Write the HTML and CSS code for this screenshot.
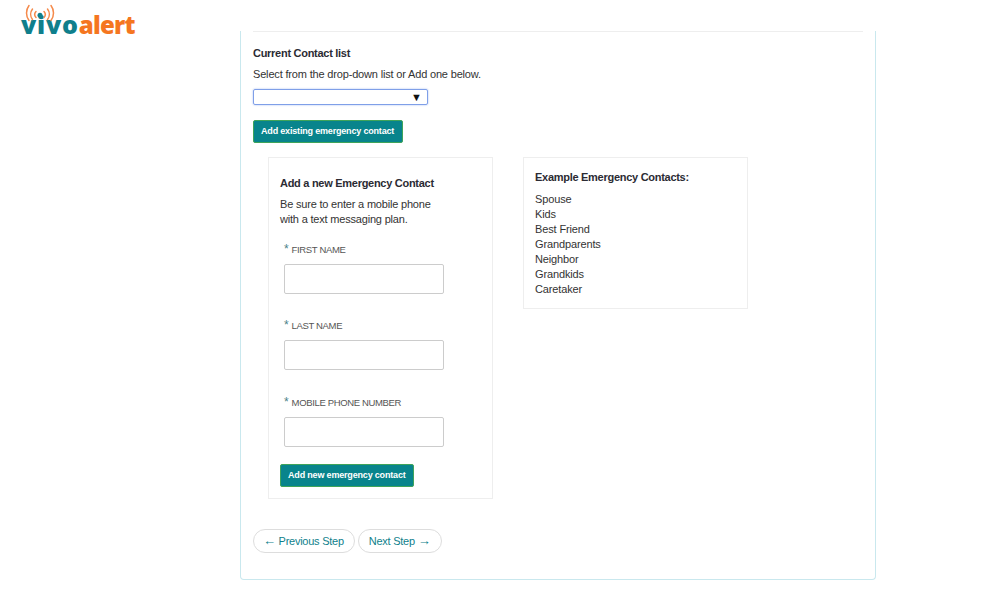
FILE: index.html
```html
<!DOCTYPE html>
<html lang="en">
<head>
  <meta charset="UTF-8">
  <title>Vivoalert Emergency Contacts</title>
  <link rel="stylesheet" href="styles.css">
</head>
<body>
  <header class="top-bar">
    <div class="logo">
      <span class="logo-text"><span class="logo-vivo">vivo</span><span class="logo-alert">alert</span></span>
      <svg class="logo-waves" width="30" height="18" viewBox="0 0 30 18" fill="none" stroke="#f58a4b" stroke-width="1.5" stroke-linecap="round">
        <path d="M11 13.5a4.5 4.5 0 0 1 0-6"/>
        <path d="M19 13.5a4.5 4.5 0 0 0 0-6"/>
        <path d="M7.5 15.5a8.5 8.5 0 0 1 0-10.5"/>
        <path d="M22.5 15.5a8.5 8.5 0 0 0 0-10.5"/>
        <path d="M4 16.5a12.5 12.5 0 0 1 0-15"/>
        <path d="M26 16.5a12.5 12.5 0 0 0 0-15"/>
        <circle cx="15" cy="11.3" r="2.5" fill="#0f7f8c" stroke="none"/>
      </svg>
    </div>
  </header>

  <main class="panel">
    <hr class="rule">

    <h4 class="list-title">Current Contact list</h4>
    <p class="list-hint">Select from the drop-down list or Add one below.</p>
    <div class="fake-select"><span class="select-arrow">▼</span></div>
    <button class="btn-teal btn-existing">Add existing emergency contact</button>

    <div class="columns">
      <section class="box box-form">
        <h4 class="box-title">Add a new Emergency Contact</h4>
        <p class="box-hint">Be sure to enter a mobile phone<br>with a text messaging plan.</p>

        <div class="field field-first">
          <label><span class="star">*</span> FIRST NAME</label>
          <input type="text">
        </div>
        <div class="field">
          <label><span class="star">*</span> LAST NAME</label>
          <input type="text">
        </div>
        <div class="field field-phone">
          <label><span class="star">*</span> MOBILE PHONE NUMBER</label>
          <input type="text">
        </div>

        <button class="btn-teal btn-new">Add new emergency contact</button>
      </section>

      <section class="box box-examples">
        <h4 class="box-title">Example Emergency Contacts:</h4>
        <ul class="examples">
          <li>Spouse</li>
          <li>Kids</li>
          <li>Best Friend</li>
          <li>Grandparents</li>
          <li>Neighbor</li>
          <li>Grandkids</li>
          <li>Caretaker</li>
        </ul>
      </section>
    </div>

    <div class="steps">
      <a class="step" href="#"><span class="step-arrow">←</span> Previous Step</a>
      <a class="step step-next" href="#">Next Step <span class="step-arrow">→</span></a>
    </div>
  </main>
</body>
</html>
```

FILE: styles.css
```css
body {
  font-family: 'Liberation Sans', Arial, sans-serif;
  font-size: 12px;
  line-height: 15px;
  color: #333;
  background-color: #fff;
  margin: 0;
}

.top-bar {
  height: 30px;
  position: relative;
  z-index: 1;
}

.logo {
  width: 120px;
  margin-left: 21px;
  position: relative;
}

.logo-waves {
  position: absolute;
  left: 4px;
  top: 4px;
}

.logo-text {
  position: absolute;
  left: 0;
  top: 8px;
  font-family: 'Open Sans', sans-serif;
  font-weight: 800;
  font-size: 25px;
  line-height: 32px;
  white-space: nowrap;
}

.logo-vivo {
  color: #0f7f8c;
  letter-spacing: 0.8px;
}

.logo-alert {
  color: #f5761f;
  font-size: 24px;
  letter-spacing: -0.8px;
}

.panel {
  width: 610px;
  height: 548px;
  margin-left: 240px;
  padding: 0 12px;
  border: 1px solid #c9e8ee;
  border-top: none;
  border-radius: 0 0 4px 4px;
}

.rule {
  height: 1px;
  margin: 1px 0 14px;
  border: none;
  background-color: #eee;
}

.list-title, .box-title {
  margin: 0;
  font-size: 11px;
  font-weight: bold;
  letter-spacing: -0.28px;
  color: #2b2b33;
}

.list-hint {
  margin: 6px 0 7px;
  font-size: 11px;
  letter-spacing: -0.17px;
}

.fake-select {
  width: 173px;
  height: 14px;
  border: 1px solid #7f9fe8;
  border-radius: 2px;
  box-shadow: 0 0 2px #9db5ee;
  display: flex;
  justify-content: flex-end;
  align-items: center;
}

.select-arrow {
  font-size: 11px;
  color: #111;
  margin-right: 5px;
}

.btn-teal {
  display: block;
  padding: 0 7px 2px;
  height: 23px;
  font-family: inherit;
  font-size: 9px;
  font-weight: bold;
  letter-spacing: -0.18px;
  white-space: nowrap;
  text-align: left;
  color: #fff;
  background-color: #08848c;
  border: 1px solid #3fa45a;
  border-radius: 2px;
}

.btn-existing {
  margin: 15px 0 14px;
  width: 150px;
}

.btn-new {
  width: 134px;
  margin-top: 17px;
}

.columns {
  display: flex;
  align-items: flex-start;
  gap: 30px;
  margin-left: 15px;
}

.box {
  box-sizing: border-box;
  width: 225px;
  border: 1px solid #eee;
  padding: 0 11px;
}

.box-form {
  height: 342px;
  padding-top: 18px;
}

.box-examples {
  height: 152px;
  padding-top: 12px;
}

.box-hint {
  margin: 6px 0 0;
  font-size: 11px;
  letter-spacing: -0.19px;
}

.field {
  margin: 24px 0 0 4px;
}

.field-first {
  margin-top: 15px;
}

.field-phone {
  margin-top: 25px;
}

.field label {
  display: block;
  font-size: 9.5px;
  letter-spacing: -0.35px;
  color: #555;
}

.star {
  color: #4a7f88;
  font-size: 12px;
  margin-right: 1px;
}

.field input {
  display: block;
  box-sizing: border-box;
  width: 160px;
  height: 30px;
  padding: 0;
  margin-top: 7px;
  border: 1px solid #ccc;
  border-radius: 2px;
}

.examples {
  list-style: none;
  margin: 7px 0 0;
  padding: 0;
  font-size: 11px;
  letter-spacing: -0.13px;
}

.steps {
  display: flex;
  gap: 3px;
  margin-top: 30px;
}

.step {
  padding: 4px 10px 4px 9px;
  font-size: 11px;
  line-height: 14px;
  letter-spacing: -0.25px;
  color: #0f7f8c;
  text-decoration: none;
  border: 1px solid #ddd;
  border-radius: 12px;
}

.step-next {
  padding: 4px 11px 4px 10px;
}

.step-arrow {
  font-size: 13px;
  line-height: 1;
}
```
